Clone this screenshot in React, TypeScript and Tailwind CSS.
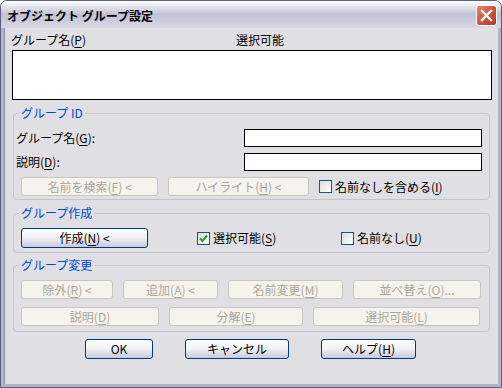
const font = { fontFamily: '"Noto Sans CJK JP", "Noto Sans", sans-serif' };

function Acc({ k }: { k: string }) {
  return (
    <>
      (<span className="underline underline-offset-2">{k}</span>)
    </>
  );
}

function DisabledButton({ w, children }: { w: string; children: React.ReactNode }) {
  return (
    <div
      className={`${w} h-[19px] shrink-0 rounded-[3px] border border-[#c9c7ba] bg-[#f4f3ee] text-[#aca899] text-[12px] leading-[17px] flex items-center justify-center`}
    >
      {children}
    </div>
  );
}

function Button({ w, children }: { w: string; children: React.ReactNode }) {
  return (
    <div
      className={`${w} h-[20px] shrink-0 rounded-[3px] border border-[#003c74] bg-gradient-to-b from-[#ffffff] via-[#f0f0f5] to-[#c9c9dc] text-black text-[12px] leading-[18px] flex items-center justify-center`}
    >
      {children}
    </div>
  );
}

function CheckBox({ checked }: { checked?: boolean }) {
  return (
    <div className="w-[13px] h-[13px] shrink-0 border border-[#1c5180] bg-gradient-to-br from-[#dcdcd7] to-[#ffffff] flex items-center justify-center">
      {checked && (
        <svg width="9" height="9" viewBox="0 0 9 9">
          <path d="M1 4.5 L3.5 7 L8 1.5" stroke="#21a121" strokeWidth="2" fill="none" />
        </svg>
      )}
    </div>
  );
}

function Group({ title, className, children }: { title: string; className: string; children: React.ReactNode }) {
  return (
    <fieldset className={`ml-[8px] w-[477px] rounded-[4px] border border-[#c5c4cc] ${className}`}>
      <legend className="ml-[5px] px-[2px] h-[14px] text-[12px] leading-[14px] text-[#0046d5]">{title}</legend>
      {children}
    </fieldset>
  );
}

export default function App() {
  return (
    <div
      style={font}
      className="w-[502px] h-[388px] flex flex-col rounded-t-[7px] border border-[#5d5d7c] bg-[#b3b2c8] overflow-hidden"
    >
      {/* title bar */}
      <div className="h-[27px] shrink-0 flex items-center justify-between bg-gradient-to-b from-[#fdfdfe] via-[#c3c2d4] to-[#d9d8e3] pl-[6px] pr-[4px]">
        <span className="text-[12px] font-bold text-black leading-[14px] mt-[3px]">オブジェクト グループ設定</span>
        <div className="w-[21px] h-[21px] mt-[2px] rounded-[3px] border border-white bg-gradient-to-br from-[#e8806c] via-[#d0553f] to-[#b23a28] flex items-center justify-center">
          <svg width="13" height="13" viewBox="0 0 13 13">
            <path d="M2 2 L11 11 M11 2 L2 11" stroke="#ffffff" strokeWidth="2.4" strokeLinecap="square" />
          </svg>
        </div>
      </div>

      {/* body */}
      <div className="flex-1 mx-[3px] mb-[3px] border-l border-[#8f8ea8] bg-[#e0dfe3] flex flex-col text-[12px] text-black">
        <div className="h-[18px] mt-[3px] flex leading-[18px]">
          <span className="ml-[6px] w-[225px]">
            グループ名<Acc k="P" />
          </span>
          <span>選択可能</span>
        </div>
        <div className="ml-[7px] mt-[1px] w-[480px] h-[50px] border border-black bg-white" />

        <Group title="グループ ID" className="mt-[6px] pb-[3px]">
          <div className="mt-[9px] flex items-center pl-[2px]">
            <span className="w-[228px] leading-[16px]">
              グループ名<Acc k="G" />:
            </span>
            <div className="w-[238px] h-[18px] border border-black bg-white" />
          </div>
          <div className="mt-[6px] flex items-center pl-[2px]">
            <span className="w-[228px] leading-[16px]">
              説明<Acc k="D" />:
            </span>
            <div className="w-[238px] h-[18px] border border-black bg-white" />
          </div>
          <div className="mt-[6px] flex items-center pl-[7px]">
            <DisabledButton w="w-[137px]">
              名前を検索<Acc k="F" />&nbsp;&lt;
            </DisabledButton>
            <div className="ml-[10px]">
              <DisabledButton w="w-[141px]">
                ハイライト<Acc k="H" />&nbsp;&lt;
              </DisabledButton>
            </div>
            <div className="ml-[10px] flex items-center gap-[3px]">
              <CheckBox />
              <span className="leading-[16px]">
                名前なしを含める<Acc k="I" />
              </span>
            </div>
          </div>
        </Group>

        <Group title="グループ作成" className="mt-[6px] pb-[4px]">
          <div className="mt-[8px] flex items-center pl-[7px]">
            <Button w="w-[127px]">
              作成<Acc k="N" />&nbsp;&lt;
            </Button>
            <div className="ml-[49px] w-[144px] flex items-center gap-[3px]">
              <CheckBox checked />
              <span className="leading-[16px]">
                選択可能<Acc k="S" />
              </span>
            </div>
            <div className="flex items-center gap-[3px]">
              <CheckBox />
              <span className="leading-[16px]">
                名前なし<Acc k="U" />
              </span>
            </div>
          </div>
        </Group>

        <Group title="グループ変更" className="mt-[5px] pb-[5px]">
          <div className="mt-[8px] flex items-center gap-[10px] pl-[7px]">
            <DisabledButton w="w-[92px]">
              除外<Acc k="R" />&nbsp;&lt;
            </DisabledButton>
            <DisabledButton w="w-[95px]">
              追加<Acc k="A" />&nbsp;&lt;
            </DisabledButton>
            <DisabledButton w="w-[115px]">
              名前変更<Acc k="M" />
            </DisabledButton>
            <DisabledButton w="w-[128px]">
              並べ替え<Acc k="O" />...
            </DisabledButton>
          </div>
          <div className="mt-[8px] flex items-center gap-[10px] pl-[7px]">
            <DisabledButton w="w-[138px]">
              説明<Acc k="D" />
            </DisabledButton>
            <DisabledButton w="w-[134px]">
              分解<Acc k="E" />
            </DisabledButton>
            <DisabledButton w="w-[167px]">
              選択可能<Acc k="L" />
            </DisabledButton>
          </div>
        </Group>

        <div className="mt-[7px] flex items-center">
          <div className="ml-[80px]">
            <Button w="w-[68px]">OK</Button>
          </div>
          <div className="ml-[32px]">
            <Button w="w-[104px]">キャンセル</Button>
          </div>
          <div className="ml-[32px]">
            <Button w="w-[95px]">
              ヘルプ<Acc k="H" />
            </Button>
          </div>
        </div>
      </div>
    </div>
  );
}
